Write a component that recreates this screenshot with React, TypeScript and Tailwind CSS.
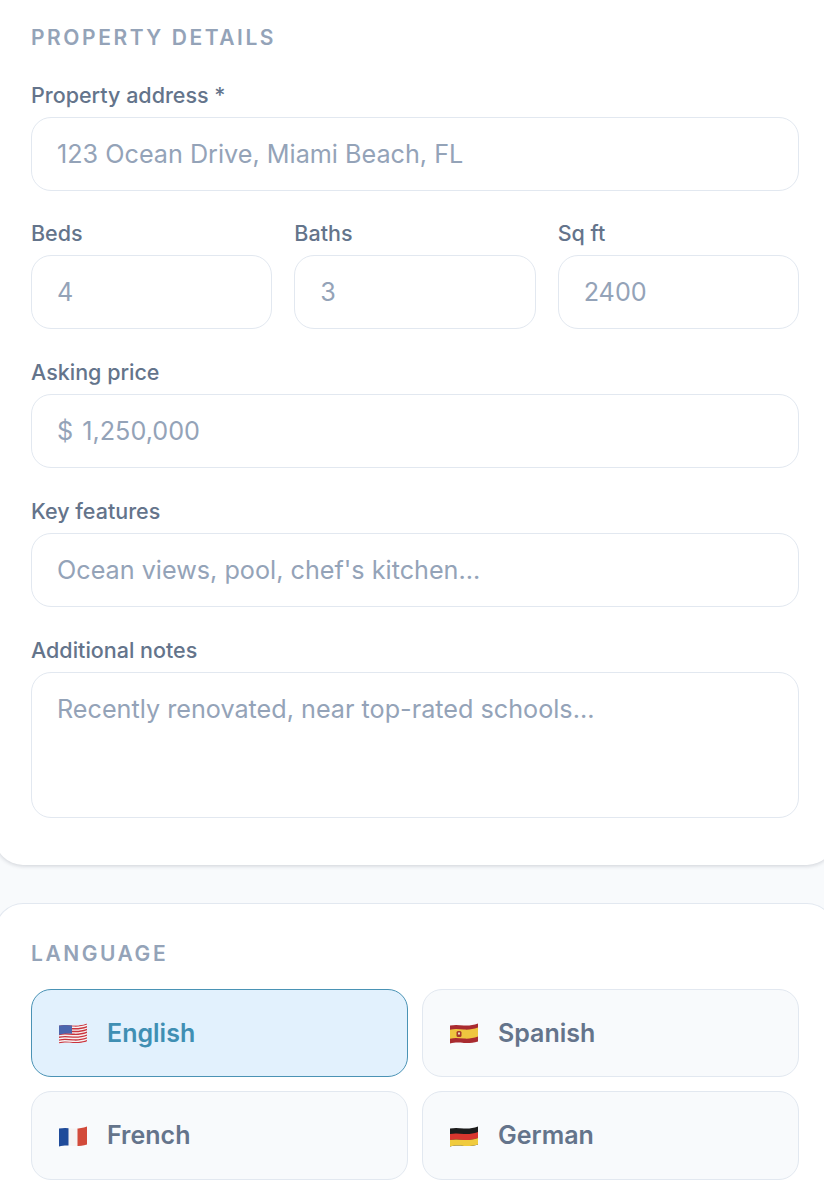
const font = "font-['Inter','Noto_Sans',sans-serif]"

function FlagShape({ id, children }: { id: string; children: React.ReactNode }) {
  // waving outline shared by all four flags
  return (
    <svg width="28" height="21" viewBox="0 0 28 21" className="shrink-0">
      <defs>
        <clipPath id={id}>
          <path d="M0 2.6C5 1.4 9 2.1 14 2.4C19 2.7 23 2.1 28 .4V18.4C23 19.8 19 20.2 14 19.9C9 19.6 5 19.2 0 20.6Z" />
        </clipPath>
      </defs>
      <g clipPath={`url(#${id})`}>{children}</g>
    </svg>
  )
}

// one band that follows the wave of the flag, y is where it meets the right edge
function wave(y: number, h: number) {
  const b = y + h
  return `M0 ${y + 2.2} C5 ${y + 1} 9 ${y + 1.7} 14 ${y + 2} C19 ${y + 2.3} 23 ${y + 1.7} 28 ${y} V${b} C23 ${b + 1.7} 19 ${b + 2.3} 14 ${b + 2} C9 ${b + 1.7} 5 ${b + 1} 0 ${b + 2.2} Z`
}

function UsFlag() {
  const stripes = [0, 2.8, 5.6, 8.4, 11.2, 14, 16.8]
  return (
    <FlagShape id="us">
      <rect width="28" height="21" fill="#f6f2f2" />
      {stripes.map((s) => (
        <path key={s} d={wave(s + 0.2, 1.4)} fill="#c9343e" />
      ))}
      <path d="M0 0H13V10.8C8 10.2 5 10.6 0 11.8Z" fill="#4c66ae" />
    </FlagShape>
  )
}

function EsFlag() {
  return (
    <FlagShape id="es">
      <rect width="28" height="21" fill="#a92b30" />
      <path d={wave(4.6, 9)} fill="#efc63f" />
      <rect x="6.5" y="8" width="5" height="6" rx="1.5" fill="#a5392c" />
      <rect x="8" y="9.5" width="2" height="2" fill="#e8dcc0" />
    </FlagShape>
  )
}

function FrFlag() {
  return (
    <FlagShape id="fr">
      <rect width="28" height="21" fill="#f5f3f3" />
      <rect width="9.5" height="21" fill="#1f4b9a" />
      <rect x="18.5" width="9.5" height="21" fill="#d24a3a" />
    </FlagShape>
  )
}

function DeFlag() {
  return (
    <FlagShape id="de">
      <rect width="28" height="21" fill="#1c1c1c" />
      <path d={wave(5.9, 6)} fill="#d8362e" />
      <path d={wave(11.9, 9)} fill="#f0cb3e" />
    </FlagShape>
  )
}

function SectionTitle({ children }: { children: string }) {
  return <h2 className="text-[21px] leading-6 font-semibold tracking-[2.55px] text-[#94a3b8]">{children}</h2>
}

function Label({ children }: { children: string }) {
  return <label className="block text-[21.5px] leading-[27px] font-medium text-[#64748b] mb-[8px]">{children}</label>
}

function Field({ label, placeholder, className, inputClassName }: { label: string; placeholder: string; className?: string; inputClassName?: string }) {
  return (
    <div className={className}>
      <Label>{label}</Label>
      <input
        placeholder={placeholder}
        className={`block w-full h-[74px] px-[25px] rounded-[20px] border border-[#e2e8f0] bg-white text-[25.2px] placeholder:text-[#94a3b8] outline-none ${inputClassName ?? ''}`}
      />
    </div>
  )
}

const languages = [
  { name: 'English', flag: <UsFlag />, active: true },
  { name: 'Spanish', flag: <EsFlag /> },
  { name: 'French', flag: <FrFlag /> },
  { name: 'German', flag: <DeFlag /> },
]

export default function App() {
  return (
    <div className={`${font} flex flex-col h-[1200px] overflow-hidden bg-[#f8fafc]`}>
      <section className="bg-white -ml-[5px] -mr-[11px] rounded-b-[28px] pt-[26px] pl-[36px] pr-[36px] pb-[47px] shadow-[0_1px_4px_rgba(15,23,42,0.18)]">
        <SectionTitle>PROPERTY DETAILS</SectionTitle>
        <Field label="Property address *" placeholder="123 Ocean Drive, Miami Beach, FL" className="mt-[31.6px]" />
        <div className="grid grid-cols-3 gap-[22px] mt-[29.75px]">
          <Field label="Beds" placeholder="4" />
          <Field label="Baths" placeholder="3" />
          <Field label="Sq ft" placeholder="2400" />
        </div>
        <Field label="Asking price" placeholder="$ 1,250,000" className="mt-[29.75px]" inputClassName="[word-spacing:2px]" />
        <Field label="Key features" placeholder="Ocean views, pool, chef's kitchen..." className="mt-[29.75px]" />
        <div className="mt-[29.75px]">
          <Label>Additional notes</Label>
          <textarea
            placeholder="Recently renovated, near top-rated schools..."
            className="block w-full h-[146px] px-[25px] py-[18px] rounded-[20px] border border-[#e2e8f0] bg-white text-[25.2px] leading-[36px] placeholder:text-[#94a3b8] outline-none resize-none"
          />
        </div>
      </section>

      <section className="flex-1 mt-[38px] -ml-[5px] -mr-[11px] bg-white rounded-t-[28px] border border-b-0 border-[#e2e8f0] pt-[38px] pl-[35px] pr-[35px]">
        <SectionTitle>LANGUAGE</SectionTitle>
        <div className="grid grid-cols-2 gap-[14px] mt-[23.4px]">
          {languages.map((lang) => (
            <button
              key={lang.name}
              className={
                lang.active
                  ? 'flex items-center gap-[20px] h-[88.4px] pl-[27px] pt-[1px] rounded-[20px] border border-[#4a93b5] bg-[#e2f1fd] text-[#3f8fb3] text-[25px] font-semibold'
                  : 'flex items-center gap-[20px] h-[88.4px] pl-[27px] pt-[1px] rounded-[20px] border border-[#e2e8f0] bg-[#f8fafc] text-[#64748b] text-[25px] font-semibold'
              }
            >
              {lang.flag}
              <span>{lang.name}</span>
            </button>
          ))}
        </div>
      </section>
    </div>
  )
}
